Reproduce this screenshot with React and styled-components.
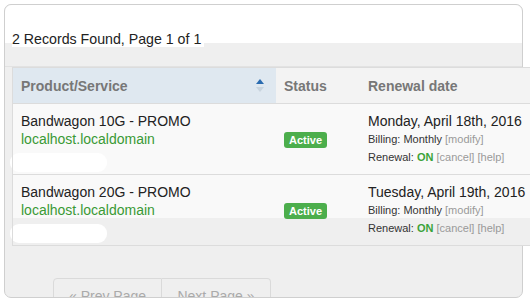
import React from 'react';
import styled, { createGlobalStyle } from 'styled-components';

const GlobalStyle = createGlobalStyle`
html, body {
  margin: 0;
  padding: 0;
  overflow: hidden;
  background: #fff;
  font-family: "Liberation Sans", Arial, sans-serif;
}
`;

const Card = styled.div`
margin: 4px 0 0 4px;
width: 517px;
height: 292px;
border: 1px solid #cfcfcf;
border-radius: 7px;
background: #efefef;
overflow-x: visible;
overflow-y: clip;
`;

const TopBar = styled.div`
height: 38px;
background: #fff;
border-radius: 7px 7px 0 0;
box-sizing: border-box;
padding: 25px 0 0 7px;
`;

const Summary = styled.span`
display: inline-block;
font-size: 14.2px;
line-height: 16px;
color: #222;
background: #fff;
padding-right: 3px;
`;

const Gap = styled.div`
height: 23px;
border-bottom: 1px solid #e2e2e2;
`;

const Table = styled.table`
margin-left: 7px;
width: 540px;
border-collapse: collapse;
border: 1px solid #dcdcdc;
`;

const Th = styled.th`
height: 35px;
padding: 0 8px;
text-align: left;
font-size: 14px;
font-weight: bold;
color: #777;
border-bottom: 1px solid #dcdcdc;
background: ${p => (p.$sorted ? '#dfe8f0' : '#f3f3f3')};
width: ${p => p.$w || 'auto'};
`;

const HeadInner = styled.div`
display: flex;
align-items: center;
justify-content: space-between;
padding-right: 3px;
`;

const Row = styled.tr`
background: ${p => (p.$shaded
  ? 'linear-gradient(#f9f9f9 0, #f9f9f9 43px, #efefef 43px)'
  : '#f9f9f9')};
border-bottom: 1px solid #dcdcdc;
`;

const Td = styled.td`
height: 71px;
box-sizing: border-box;
padding: 8px 8px 0;
vertical-align: ${p => (p.$middle ? 'middle' : 'top')};
font-size: 14px;
line-height: 18px;
color: #222;
`;

const Domain = styled.div`
color: #3a9a35;
`;

const Blot = styled.div`
margin: 5px 0 0 -11px;
width: 97px;
height: 19px;
border-radius: 9px;
background: #fff;
`;

const Badge = styled.span`
display: inline-block;
margin-bottom: 8px;
padding: 0 5px;
height: 16px;
line-height: 16px;
border-radius: 3px;
background: #4cae4c;
color: #fff;
font-size: 11px;
font-weight: bold;
`;

const Small = styled.div`
font-size: 11px;
line-height: 18px;
color: #333;
`;

const On = styled.b`
color: #3aa33a;
`;

const Muted = styled.span`
color: #999;
`;

const Pager = styled.div`
display: flex;
margin: 32px 0 0 48px;
`;

const PageBtn = styled.div`
width: 109px;
height: 30px;
box-sizing: border-box;
border: 1px solid #dadada;
border-left-width: ${p => (p.$first ? '1px' : '0')};
border-radius: ${p => (p.$first ? '4px 0 0 0' : '0 4px 0 0')};
padding-top: 9px;
text-align: center;
font-size: 14px;
color: #aaa;
`;

const SortIcon = () => (
    <svg width="10" height="16" viewBox="0 0 10 16">
        <path d="M5 1 L9 6 L1 6 Z" fill="#2b6cb0" />
        <path d="M5 14 L9 9 L1 9 Z" fill="#c8d4de" />
    </svg>
);

const services = [
    { name: 'Bandwagon 10G - PROMO', date: 'Monday, April 18th, 2016' },
    { name: 'Bandwagon 20G - PROMO', date: 'Tuesday, April 19th, 2016' }
];

function App() {
    return (
        <>
            <GlobalStyle />
            <Card>
                <TopBar>
                    <Summary>2 Records Found, Page 1 of 1</Summary>
                </TopBar>
                <Gap />
                <Table>
                    <thead>
                        <tr>
                            <Th $sorted $w="247px">
                                <HeadInner>
                                    Product/Service
                                    <SortIcon />
                                </HeadInner>
                            </Th>
                            <Th $w="68px">Status</Th>
                            <Th>Renewal date</Th>
                        </tr>
                    </thead>
                    <tbody>
                        {services.map((s, i) => (
                            <Row key={i} $shaded={i === 1}>
                                <Td>
                                    <div>{s.name}</div>
                                    <Domain>localhost.localdomain</Domain>
                                    <Blot />
                                </Td>
                                <Td $middle>
                                    <Badge>Active</Badge>
                                </Td>
                                <Td>
                                    <div>{s.date}</div>
                                    <Small>Billing: Monthly <Muted>[modify]</Muted></Small>
                                    <Small>Renewal: <On>ON</On> <Muted>[cancel]</Muted> <Muted>[help]</Muted></Small>
                                </Td>
                            </Row>
                        ))}
                    </tbody>
                </Table>
                <Pager>
                    <PageBtn $first>« Prev Page</PageBtn>
                    <PageBtn>Next Page »</PageBtn>
                </Pager>
            </Card>
        </>
    );
}

export default App;
